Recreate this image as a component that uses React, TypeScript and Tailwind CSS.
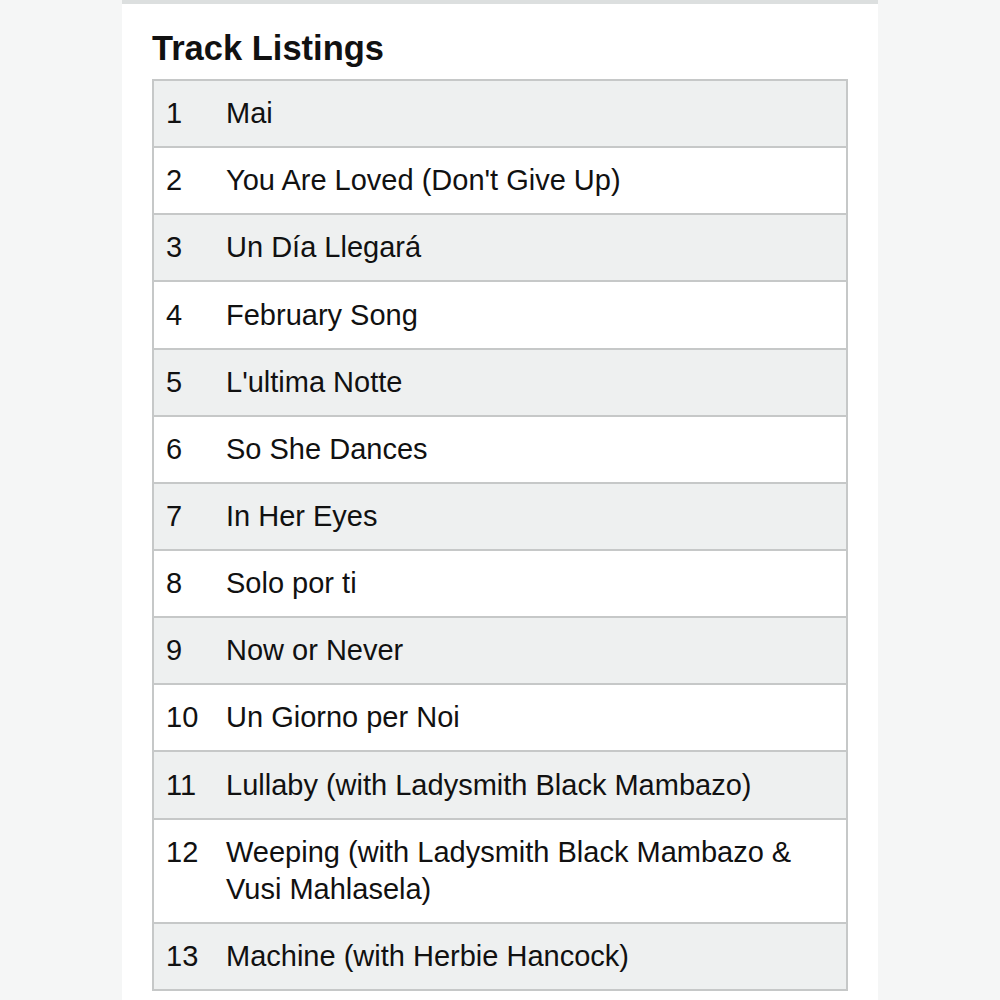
const TRACKS = [
  'Mai',
  "You Are Loved (Don't Give Up)",
  'Un Día Llegará',
  'February Song',
  "L'ultima Notte",
  'So She Dances',
  'In Her Eyes',
  'Solo por ti',
  'Now or Never',
  'Un Giorno per Noi',
  'Lullaby (with Ladysmith Black Mambazo)',
  'Weeping (with Ladysmith Black Mambazo & Vusi Mahlasela)',
  'Machine (with Herbie Hancock)',
];

export default function App() {
  return (
    <div className="min-h-screen bg-[#f5f6f6] font-['Liberation_Sans',Arial,sans-serif] text-[#111]">
      <div className="mx-auto w-[756px] min-h-screen bg-white border-t-4 border-[#dcdfdf] px-[30px] pt-6 pb-4">
        <h2 className="text-[34.5px] leading-[41px] font-bold mb-[10px]">Track Listings</h2>

        {/* Track table */}
        <div className="border-2 border-[#c6c8c8]">
          {TRACKS.map((title, i) => (
            <div
              key={i}
              className={`flex text-[29px] leading-[37px] pt-[14.15px] pb-[14px] ${i > 0 ? 'border-t-2 border-[#c6c8c8]' : ''} ${
                i % 2 === 0 ? 'bg-[#eef0f0]' : 'bg-white'
              }`}
            >
              <div className="w-[72px] shrink-0 pl-3">{i + 1}</div>
              <div className="flex-1 pr-[14px]">{title}</div>
            </div>
          ))}
        </div>
      </div>
    </div>
  );
}
